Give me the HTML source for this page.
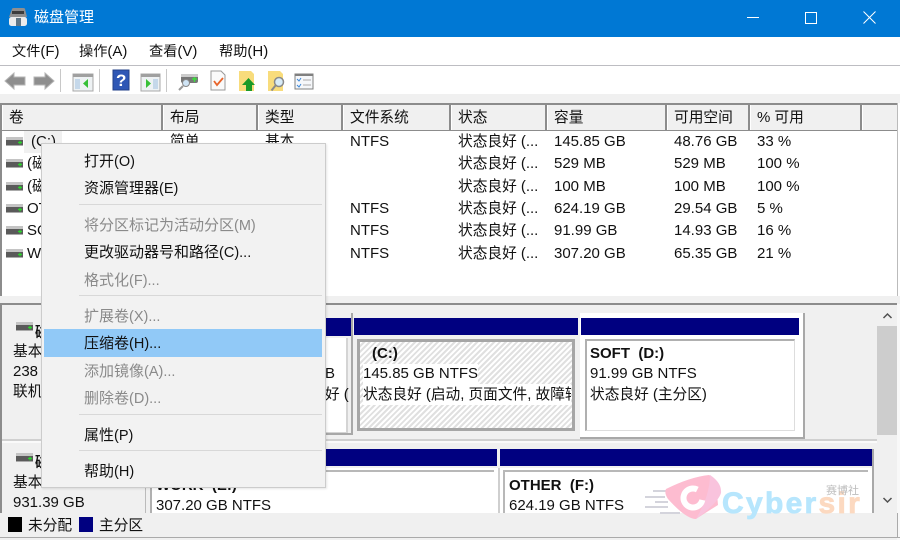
<!DOCTYPE html>
<html lang="zh"><head><meta charset="utf-8"><title>磁盘管理</title>
<style>
html,body{margin:0;padding:0}
body{width:900px;height:540px;position:relative;overflow:hidden;background:#f0f0f0;font:14.7px/20px "Liberation Sans","Noto Sans CJK SC",sans-serif;color:#111;filter:blur(.3px)}
div,span,svg{position:absolute}
.t{white-space:nowrap;margin-top:1px}
u{text-decoration:none;font-size:15px}
.g{color:#8a8a8a}
.b{background:#000080}
.h{top:105px;height:25px;background:#f0f0f0;border-left:1px solid #fff;border-right:2px solid #8c8c8c;box-sizing:border-box}
.s{background:#d8d8d8;height:1px;left:79px;width:243px}
.m{font-size:14.2px}
.c{font-size:15px;margin-top:2px}
.c u{font-size:14.5px}
</style></head><body>
<svg width="0" height="0"><defs>
<symbol id="d" viewBox="0 0 17 9"><rect x="0" y="0" width="17" height="4" fill="#c4c4c4"/><rect x="0" y="3" width="17" height="5" fill="#5a5a5a"/><rect x="0" y="8" width="17" height="1" fill="#aaa"/><path d="M12 5.5h4M14 3.8v3.6" stroke="#2bd42b" stroke-width="1.2"/></symbol>
</defs></svg>

<div style="left:0;top:0;width:900px;height:37px;background:#0078d4"></div>
<svg style="left:8px;top:7px" width="20" height="20" viewBox="0 0 20 20"><path d="M4 2Q4 1 6 1h9q2 0 2 1l2 8H1z" fill="#8f8f8f"/><rect x="4" y="4" width="12" height="3" fill="#3c3c3c"/><rect x="1" y="10" width="18" height="9" rx="2.500" fill="#ececec"/><rect x="8" y="11" width="5" height="8" fill="#5f7686"/></svg>
<div class="t" style="left:34px;top:7px;color:#fff;font-size:15px">磁盘管理</div>
<div style="left:747px;top:17px;width:12px;height:1px;background:#fff"></div>
<div style="left:805px;top:12px;width:10px;height:10px;border:1px solid #fff"></div>
<svg style="left:863px;top:11px" width="13" height="13" viewBox="0 0 13 13"><path d="M.5.5l12 12M12.5.5l-12 12" stroke="#fff" stroke-width="1"/></svg>

<div style="left:0;top:37px;width:900px;height:28px;background:#fff"></div>
<div class="t m" style="left:12px;top:41px">文件<u>(F)</u></div>
<div class="t m" style="left:79px;top:41px">操作<u>(A)</u></div>
<div class="t m" style="left:149px;top:41px">查看<u>(V)</u></div>
<div class="t m" style="left:219px;top:41px">帮助<u>(H)</u></div>
<div style="left:0;top:65px;width:900px;height:1px;background:#bdbdc2"></div>

<div style="left:0;top:66px;width:900px;height:28px;background:#fff"></div>
<svg style="left:0;top:66px" width="340" height="28" viewBox="0 0 340 28">
<path d="M5 15l9-8v4h11v8H14v4z" fill="#8e8e8e" stroke="#b5b5b5"/>
<path d="M54 15l-9-8v4H34v8h11v4z" fill="#8e8e8e" stroke="#b5b5b5"/>
<path d="M60.500 3v23M99.500 3v23M166.500 3v23" stroke="#c8c8c8"/>
<rect x="73" y="8" width="20" height="17" fill="#eef2f4" stroke="#a8a8a8"/><rect x="73" y="8" width="20" height="3" fill="#a0a0a0"/><rect x="75" y="13" width="5" height="10" fill="#c5d8ea"/><path d="M88 13v9l-5-4.500z" fill="#38c038"/>
<rect x="113" y="4" width="16" height="20" fill="#2f57b5" stroke="#23408a"/><text x="116" y="20" fill="#fff" font-size="17" font-weight="700" font-family="Liberation Sans">?</text>
<rect x="141" y="8" width="19" height="17" fill="#eef2f4" stroke="#a8a8a8"/><rect x="141" y="8" width="19" height="3" fill="#a0a0a0"/><rect x="153" y="13" width="5" height="10" fill="#c5d8ea"/><path d="M146 13v9l5-4.500z" fill="#38c038"/>
<rect x="181" y="9" width="17" height="8" rx="2" fill="#777"/><rect x="181" y="8" width="17" height="3" fill="#ccc"/><path d="M192 13h5M194.500 11v5" stroke="#3fdc3f" stroke-width="1.500"/><circle cx="186" cy="17" r="3.500" fill="#cfe4f5" stroke="#888"/><path d="M183 20l-4 4" stroke="#999" stroke-width="2"/>
<path d="M211 5h10l4 4v15h-14z" fill="#fafafa" stroke="#999"/><path d="M214 15l3 4 6-7" fill="none" stroke="#e8652c" stroke-width="1.800"/>
<path d="M239 5h12l3 3v17h-15z" fill="#f8dc7c"/><path d="M252 25v-6h3l-6.500-7-6.500 7h4v6z" fill="#1b9a28"/>
<path d="M268 5h12l3 3v17h-15z" fill="#f8dc7c"/><circle cx="279" cy="16" r="4.500" fill="#d8ecf8" stroke="#8a8a8a" stroke-width="1.500"/><path d="M275.500 19.500l-4 5" stroke="#8a8a8a" stroke-width="2"/>
<rect x="295" y="8" width="18" height="15" fill="#f5f7fa" stroke="#808080"/><rect x="295" y="8" width="18" height="2" fill="#808080"/><path d="M297 13l2 2 2-3M297 19l2 2 2-3" stroke="#3a86d8" fill="none"/><path d="M303 14h8M303 19h8" stroke="#aaa"/>
</svg>

<div style="left:0;top:94px;width:900px;height:9px;background:#f0f0f0"></div>
<div style="left:0;top:103px;width:900px;height:193px;background:#fff"></div>
<div style="left:0;top:103px;width:897px;height:2px;background:#8c8c8c"></div>
<div style="left:0;top:103px;width:2px;height:193px;background:#8c8c8c"></div>
<div style="left:897px;top:103px;width:1px;height:193px;background:#bbb"></div>
<div class="h" style="left:2px;width:161px"></div>
<div class="h" style="left:163px;width:95px"></div>
<div class="h" style="left:258px;width:85px"></div>
<div class="h" style="left:343px;width:108px"></div>
<div class="h" style="left:451px;width:96px"></div>
<div class="h" style="left:547px;width:120px"></div>
<div class="h" style="left:667px;width:83px"></div>
<div class="h" style="left:750px;width:112px"></div>
<div class="h" style="left:862px;width:35px;border-right:0"></div>
<div style="left:0;top:130px;width:897px;height:1px;background:#8c8c8c"></div>
<div class="t" style="left:9px;top:107px">卷</div>
<div class="t" style="left:170px;top:107px">布局</div>
<div class="t" style="left:265px;top:107px">类型</div>
<div class="t" style="left:350px;top:107px">文件系统</div>
<div class="t" style="left:458px;top:107px">状态</div>
<div class="t" style="left:554px;top:107px">容量</div>
<div class="t" style="left:674px;top:107px">可用空间</div>
<div class="t" style="left:757px;top:107px"><u>%</u> 可用</div>

<div style="left:24px;top:131px;width:38px;height:22px;background:#f0f0f0"></div>
<svg style="left:6px;top:137px" width="17" height="9"><use href="#d"/></svg>
<svg style="left:6px;top:159px" width="17" height="9"><use href="#d"/></svg>
<svg style="left:6px;top:182px" width="17" height="9"><use href="#d"/></svg>
<svg style="left:6px;top:204px" width="17" height="9"><use href="#d"/></svg>
<svg style="left:6px;top:226px" width="17" height="9"><use href="#d"/></svg>
<svg style="left:6px;top:249px" width="17" height="9"><use href="#d"/></svg>
<div class="t" style="left:31px;top:131px"><u>(C:)</u></div>
<div class="t" style="left:27px;top:153px"><u>(</u>磁</div>
<div class="t" style="left:27px;top:176px"><u>(</u>磁</div>
<div class="t" style="left:27px;top:198px"><u>OT</u></div>
<div class="t" style="left:27px;top:220px"><u>SO</u></div>
<div class="t" style="left:27px;top:243px"><u>W</u></div>

<div class="t" style="left:170px;top:131px">简单</div><div class="t" style="left:265px;top:131px">基本</div>
<div class="t" style="left:350px;top:131px"><u>NTFS</u></div><div class="t" style="left:458px;top:131px">状态良好 <u>(...</u></div><div class="t" style="left:554px;top:131px"><u>145.85 GB</u></div><div class="t" style="left:674px;top:131px"><u>48.76 GB</u></div><div class="t" style="left:757px;top:131px"><u>33 %</u></div>
<div class="t" style="left:458px;top:153px">状态良好 <u>(...</u></div><div class="t" style="left:554px;top:153px"><u>529 MB</u></div><div class="t" style="left:674px;top:153px"><u>529 MB</u></div><div class="t" style="left:757px;top:153px"><u>100 %</u></div>
<div class="t" style="left:458px;top:176px">状态良好 <u>(...</u></div><div class="t" style="left:554px;top:176px"><u>100 MB</u></div><div class="t" style="left:674px;top:176px"><u>100 MB</u></div><div class="t" style="left:757px;top:176px"><u>100 %</u></div>
<div class="t" style="left:350px;top:198px"><u>NTFS</u></div><div class="t" style="left:458px;top:198px">状态良好 <u>(...</u></div><div class="t" style="left:554px;top:198px"><u>624.19 GB</u></div><div class="t" style="left:674px;top:198px"><u>29.54 GB</u></div><div class="t" style="left:757px;top:198px"><u>5 %</u></div>
<div class="t" style="left:350px;top:220px"><u>NTFS</u></div><div class="t" style="left:458px;top:220px">状态良好 <u>(...</u></div><div class="t" style="left:554px;top:220px"><u>91.99 GB</u></div><div class="t" style="left:674px;top:220px"><u>14.93 GB</u></div><div class="t" style="left:757px;top:220px"><u>16 %</u></div>
<div class="t" style="left:350px;top:243px"><u>NTFS</u></div><div class="t" style="left:458px;top:243px">状态良好 <u>(...</u></div><div class="t" style="left:554px;top:243px"><u>307.20 GB</u></div><div class="t" style="left:674px;top:243px"><u>65.35 GB</u></div><div class="t" style="left:757px;top:243px"><u>21 %</u></div>

<div style="left:0;top:296px;width:900px;height:8px;background:#f0f0f0"></div>
<div style="left:897px;top:304px;width:3px;height:236px;background:#f8f8f8"></div>
<div style="left:0;top:303px;width:897px;height:2px;background:#8c8c8c"></div>
<div style="left:0;top:303px;width:2px;height:210px;background:#8c8c8c"></div>
<div style="left:2px;top:305px;width:875px;height:208px;background:#f0f0f0"></div>
<div style="left:2px;top:439px;width:875px;height:2px;background:#d0d0d0"></div>
<div style="left:2px;top:441px;width:875px;height:2px;background:#fafafa"></div>

<svg style="left:16px;top:322px" width="17" height="9"><use href="#d"/></svg>
<div class="t" style="left:35px;top:322px;font-weight:700">磁</div>
<div class="t" style="left:13px;top:341px">基本</div>
<div class="t" style="left:13px;top:361px"><u>238</u></div>
<div class="t" style="left:13px;top:381px">联机</div>
<svg style="left:16px;top:453px" width="17" height="9"><use href="#d"/></svg>
<div class="t" style="left:35px;top:452px;font-weight:700">磁</div>
<div class="t" style="left:13px;top:472px">基本</div>
<div class="t" style="left:13px;top:492px"><u>931.39 GB</u></div>

<div style="left:325px;top:318px;width:26px;height:18px" class="b"></div>
<div style="left:325px;top:338px;width:23px;height:95px;background:#fff;border-right:2px solid #d4d4d4;border-bottom:1px solid #d4d4d4;box-sizing:border-box"></div>
<div style="left:351px;top:313px;width:2px;height:122px;background:#a8a8a8"></div>
<div style="left:325px;top:433px;width:28px;height:2px;background:#a8a8a8"></div>
<div class="t" style="left:325px;top:363px"><u>B</u></div>
<div class="t" style="left:325px;top:384px">好 <u>(</u></div>

<div style="left:354px;top:318px;width:224px;height:17px" class="b"></div>
<div style="left:357px;top:339px;width:218px;height:92px;box-sizing:border-box;border:3px solid #a6a6a6;background:repeating-linear-gradient(135deg,#fff 0 2px,#e0e0e0 2px 4px)"></div>
<div class="t" style="left:372px;top:343px;font-weight:700"><u>(C:)</u></div>
<div class="t" style="left:363px;top:363px;background:#fff;height:20px"><u>145.85 GB NTFS</u></div>
<div style="left:363px;top:384px;width:208px;height:21px;overflow:hidden;background:#fff"><span class="t" style="left:0;top:0">状态良好 <u>(</u>启动<u>,</u> 页面文件<u>,</u> 故障转储<u>,</u> 主分区<u>)</u></span></div>

<div style="left:580px;top:313px;width:225px;height:126px;background:#fff;box-sizing:border-box;border-right:2px solid #a8a8a8;border-bottom:2px solid #a8a8a8"></div>
<div style="left:581px;top:318px;width:218px;height:17px" class="b"></div>
<div style="left:585px;top:339px;width:210px;height:92px;box-sizing:border-box;border-top:2px solid #b0b0b0;border-left:2px solid #b0b0b0;border-right:1px solid #ddd;border-bottom:1px solid #ddd"></div>
<div class="t" style="left:590px;top:343px;font-weight:700"><u>SOFT&nbsp; (D:)</u></div>
<div class="t" style="left:590px;top:363px"><u>91.99 GB NTFS</u></div>
<div class="t" style="left:590px;top:384px">状态良好 <u>(</u>主分区<u>)</u></div>

<div style="left:145px;top:443px;width:1px;height:70px;background:#bbb"></div>
<div style="left:150px;top:449px;width:347px;height:17px" class="b"></div>
<div style="left:150px;top:468px;width:348px;height:45px;background:#fff;border-left:2px solid #b0b0b0;box-sizing:border-box"></div>
<div style="left:320px;top:470px;width:174px;height:2px;background:#b8b8b8"></div>
<div class="t" style="left:156px;top:475px;font-weight:700"><u>WORK&nbsp; (E:)</u></div>
<div class="t" style="left:156px;top:495px;height:18px;overflow:hidden"><u>307.20 GB NTFS</u></div>

<div style="left:500px;top:449px;width:372px;height:17px" class="b"></div>
<div style="left:872px;top:449px;width:2px;height:64px;background:#a8a8a8"></div>
<div style="left:498px;top:468px;width:374px;height:45px;background:#fff;border-left:2px solid #cfcfcf;box-sizing:border-box"></div>
<div style="left:503px;top:470px;width:365px;height:2px;background:#b8b8b8"></div>
<div style="left:503px;top:470px;width:2px;height:43px;background:#b8b8b8"></div>
<div class="t" style="left:509px;top:475px;font-weight:700"><u>OTHER&nbsp; (F:)</u></div>
<div class="t" style="left:509px;top:495px;height:18px;overflow:hidden"><u>624.19 GB NTFS</u></div>

<div style="left:877px;top:305px;width:20px;height:208px;background:#f0f0f0"></div>
<div style="left:877px;top:326px;width:20px;height:109px;background:#cdcdcd"></div>
<svg style="left:882px;top:312px" width="11" height="8"><path d="M1.500 6l4-4 4 4" fill="none" stroke="#505050" stroke-width="1.500"/></svg>
<svg style="left:882px;top:496px" width="11" height="8"><path d="M1.500 2l4 4 4-4" fill="none" stroke="#505050" stroke-width="1.500"/></svg>

<div style="left:2px;top:513px;width:895px;height:24px;background:#f0f0f0"></div>
<div style="left:897px;top:513px;width:1px;height:24px;background:#aaa"></div>
<div style="left:0;top:537px;width:900px;height:1px;background:#aaa"></div>
<div style="left:8px;top:517px;width:14px;height:15px;background:#000"></div>
<div class="t" style="left:28px;top:515px">未分配</div>
<div style="left:79px;top:517px;width:14px;height:15px;background:#000080"></div>
<div class="t" style="left:99px;top:515px">主分区</div>

<svg style="left:640px;top:465px" width="240" height="60" viewBox="0 0 240 60">
<path d="M13 26h15M5 32h20M15 37h13M5 42h23M20 48h20" stroke="#d4d4dc" stroke-width="2"/>
<path d="M26 24Q50 12 69 10Q76 12 78 40Q62 50 56 54Q46 54 28 34Q24 28 26 24z" fill="#fdbcd0"/>
<path d="M70 10Q82 18 81 28Q78 38 56 54Q70 30 70 10z" fill="#f9c3dd"/>
<circle cx="53" cy="33" r="9.500" fill="none" stroke="#fff" stroke-width="6" stroke-dasharray="47 12.700" transform="rotate(12 53 33)"/>
<text x="82" y="48" font-family="Liberation Sans" font-weight="700" font-size="30" letter-spacing="2.300" fill="#b7e6fd" stroke="#b7e6fd" stroke-width=".8">Cyber<tspan fill="#fcd9c0" stroke="#fcd9c0">sir</tspan></text>
<text x="186" y="29" font-family="Liberation Sans,Noto Sans CJK SC" font-size="11" fill="#bdbdbd">赛博社</text>
</svg>

<div style="left:41px;top:143px;width:285px;height:345px;background:#f2f2f2;border:1px solid #ccc;box-sizing:border-box;box-shadow:1px 1px 2px rgba(0,0,0,.1)"></div>
<div style="left:44px;top:329px;width:278px;height:28px;background:#91c9f7"></div>
<div class="s" style="top:204px"></div><div class="s" style="top:295px"></div><div class="s" style="top:414px"></div><div class="s" style="top:450px"></div>
<div class="t c" style="left:84px;top:150px">打开<u>(O)</u></div>
<div class="t c" style="left:84px;top:177px">资源管理器<u>(E)</u></div>
<div class="t g c" style="left:84px;top:214px">将分区标记为活动分区<u>(M)</u></div>
<div class="t c" style="left:84px;top:241px">更改驱动器号和路径<u>(C)...</u></div>
<div class="t g c" style="left:84px;top:269px">格式化<u>(F)...</u></div>
<div class="t g c" style="left:84px;top:305px">扩展卷<u>(X)...</u></div>
<div class="t c" style="left:84px;top:332px">压缩卷<u>(H)...</u></div>
<div class="t g c" style="left:84px;top:360px">添加镜像<u>(A)...</u></div>
<div class="t g c" style="left:84px;top:387px">删除卷<u>(D)...</u></div>
<div class="t c" style="left:84px;top:424px">属性<u>(P)</u></div>
<div class="t c" style="left:84px;top:460px">帮助<u>(H)</u></div>
</body></html>
